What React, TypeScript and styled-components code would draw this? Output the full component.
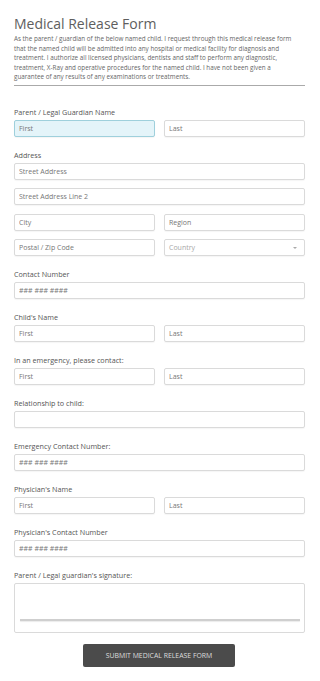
import styled, { createGlobalStyle, css } from 'styled-components';

const GlobalStyle = createGlobalStyle`
  html, body {
    margin: 0;
    padding: 0;
    background: #ffffff;
  }
  * {
    box-sizing: border-box;
  }
`;

type FieldDef = {
  label: string;
  rows: string[][];
};

const fields: FieldDef[] = [
  { label: 'Parent / Legal Guardian Name', rows: [['First', 'Last']] },
  {
    label: 'Address',
    rows: [['Street Address'], ['Street Address Line 2'], ['City', 'Region'], ['Postal / Zip Code', '#country']],
  },
  { label: 'Contact Number', rows: [['### ### ####']] },
  { label: "Child's Name", rows: [['First', 'Last']] },
  { label: 'In an emergency, please contact:', rows: [['First', 'Last']] },
  { label: 'Relationship to child:', rows: [['']] },
  { label: 'Emergency Contact Number:', rows: [['### ### ####']] },
  { label: "Physician's Name", rows: [['First', 'Last']] },
  { label: "Physician's Contact Number", rows: [['### ### ####']] },
];

const introLines = [
  'As the parent / guardian of the below named child. I request through this medical release form',
  'that the named child will be admitted into any hospital or medical facility for diagnosis and',
  'treatment. I authorize all licensed physicians, dentists and staff to perform any diagnostic,',
  'treatment, X-Ray and operative procedures for the named child. I have not been given a',
  'guarantee of any results of any examinations or treatments.',
];

export default function App() {
  return (
    <>
      <GlobalStyle />
      <Page>
        <Title>Medical Release Form</Title>
        <Intro>
          {introLines.map((line, i) => (
            <IntroLine key={i}>{line}</IntroLine>
          ))}
        </Intro>
        <Divider />

        <Form>
          {fields.map((field, fi) => (
            <Group key={field.label}>
              <Label>{field.label}</Label>
              <Rows>
                {field.rows.map((row, ri) => (
                  <Row key={ri} $cols={row.length}>
                    {row.map((ph, ci) =>
                      ph === '#country' ? (
                        <Select key={ci}>
                          <span>Country</span>
                          <Caret />
                        </Select>
                      ) : (
                        <Input key={ci} placeholder={ph} $focused={fi === 0 && ri === 0 && ci === 0} readOnly />
                      )
                    )}
                  </Row>
                ))}
              </Rows>
            </Group>
          ))}

          <Group>
            <Label>Parent / Legal guardian's signature:</Label>
            <SignatureBox>
              <SignatureLine />
            </SignatureBox>
          </Group>

          <ButtonRow>
            <SubmitButton type="button">Submit Medical Release Form</SubmitButton>
          </ButtonRow>
        </Form>
      </Page>
    </>
  );
}

const Page = styled.div`
  padding: 14px 15px 14px 14px;
  font-family: 'Open Sans', 'Noto Sans', sans-serif;
  color: #555555;
`;

const Title = styled.h1`
  margin: 0;
  font-size: 14px;
  line-height: 20px;
  font-weight: 400;
  color: #5e5e5e;
`;

const Intro = styled.div`
  margin: 0;
  font-size: 6.3px;
  line-height: 9.6px;
  color: #666666;
`;

const IntroLine = styled.div`
  white-space: nowrap;
`;

const Divider = styled.hr`
  margin: 3px 0 0 0;
  border: 0;
  border-top: 1px solid #aaaaaa;
`;

const Form = styled.form`
  margin-top: 21px;
`;

const Group = styled.div`
  margin-bottom: 13px;
`;

const Label = styled.div`
  font-size: 7.2px;
  line-height: 10px;
  color: #555555;
  margin-bottom: 3px;
`;

const Rows = styled.div`
  display: flex;
  flex-direction: column;
  gap: 8.5px;
`;

const Row = styled.div<{ $cols: number }>`
  display: grid;
  grid-template-columns: ${p => (p.$cols === 2 ? '1fr 1fr' : '1fr')};
  column-gap: 9px;
`;

const fieldBox = css`
  height: 17px;
  width: 100%;
  border: 1px solid #dadada;
  border-radius: 2px;
  background: #ffffff;
  box-shadow: 0 1px 1px rgba(0, 0, 0, 0.04);
  font-family: 'Open Sans', 'Noto Sans', sans-serif;
  font-size: 7px;
  padding: 0 4px;
`;

const Input = styled.input<{ $focused?: boolean }>`
  ${fieldBox}
  outline: none;
  color: #666666;

  &::placeholder {
    color: #777777;
  }

  ${p =>
    p.$focused &&
    css`
      background: #e4f4f9;
      border-color: #9fd0dc;
    `}
`;

const Select = styled.div`
  ${fieldBox}
  display: flex;
  align-items: center;
  justify-content: space-between;
  color: #a8a8a8;
  padding-right: 7px;
`;

const Caret = styled.span`
  width: 0;
  height: 0;
  border-left: 2.5px solid transparent;
  border-right: 2.5px solid transparent;
  border-top: 2.5px solid #aaaaaa;
`;

const SignatureBox = styled.div`
  height: 50px;
  border: 1px solid #dadada;
  border-radius: 2px;
  padding: 35px 4px 0 5px;
`;

const SignatureLine = styled.div`
  height: 2px;
  background: #cfcfcf;
  box-shadow: 0 1px 1px rgba(0, 0, 0, 0.08);
`;

const ButtonRow = styled.div`
  display: flex;
  justify-content: center;
  margin-top: -2px;
  padding-right: 1px;
`;

const SubmitButton = styled.button`
  width: 152px;
  height: 23px;
  border: 0;
  border-radius: 2px;
  background: #4b4b4b;
  color: #dddddd;
  font-family: 'Open Sans', 'Noto Sans', sans-serif;
  font-size: 6.9px;
  text-transform: uppercase;
  cursor: pointer;
`;
